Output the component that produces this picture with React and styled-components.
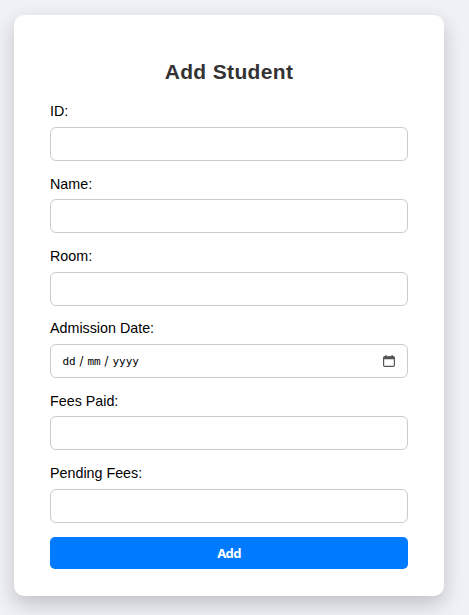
import React from 'react';
import styled, { createGlobalStyle } from 'styled-components';

const GlobalStyle = createGlobalStyle`
  * { box-sizing: border-box; }
  body {
    margin: 0;
    background: #f0f1f6;
    font-family: "Liberation Sans", Arial, sans-serif;
    overflow: hidden;
  }
`;

const Page = styled.main`
  height: 615px;
  padding: 14.67px 25px 0 14px;
`;

const Card = styled.form`
  width: 430px;
  height: 581.33px;
  padding: 44.33px 36px 0;
  background: #fff;
  border-radius: 10px;
  box-shadow: 0 8px 20px rgba(0, 0, 0, 0.2);
`;

const Title = styled.h2`
  margin: 0 0 16.3px;
  font-size: 21px;
  line-height: 26px;
  letter-spacing: 0.35px;
  text-align: center;
  color: #333;
`;

const Field = styled.label`
  display: flex;
  flex-direction: column;
  gap: 4.7px;
  height: 72.33px;
  font-size: 14.3px;
  line-height: 21px;
  color: #000;
`;

const fieldBox = `
  width: 100%;
  height: 34px;
  border: 1px solid #ccc;
  border-radius: 6px;
  background: #fff;
`;

const Input = styled.input`
  ${fieldBox}
  padding: 0 12px;
  font: 14px "Liberation Sans", Arial, sans-serif;
  outline: none;
`;

const DateBox = styled.div`
  ${fieldBox}
  display: flex;
  align-items: center;
  justify-content: space-between;
  padding: 0 12px 0 11px;
`;

const DateParts = styled.span`
  display: flex;
  gap: 2.5px;
  padding-top: 2px;
  font: 11px "DejaVu Sans Mono", monospace;
`;

const Part = styled.span`
  width: ${({ $w }) => $w}px;
  text-align: center;
  white-space: nowrap;
`;

const Slash = styled.span`
  width: 6px;
  font-family: "DejaVu Sans", sans-serif;
  font-size: 11.5px;
  line-height: 13px;
  text-align: center;
`;

const Button = styled.button`
  display: block;
  width: 100%;
  height: 32px;
  margin-top: 2.03px;
  padding: 0;
  border: 0;
  border-radius: 5px;
  background: #007bff;
  color: #fff;
  font: bold 13px "Noto Sans", "Open Sans", sans-serif;
  letter-spacing: -0.7px;
`;

const CalendarIcon = () => (
  <svg width="12" height="12" viewBox="0 0 12 12" fill="none">
    <rect x="0.6" y="1.8" width="10.8" height="9.6" rx="1.2" stroke="#555" strokeWidth="1.2" />
    <path d="M0.5 1.5h11v2.7h-11zM2 0.3h1.7v2H2zM8.3 0.3H10v2H8.3z" fill="#555" />
  </svg>
);

const fields = ['ID:', 'Name:', 'Room:', 'Admission Date:', 'Fees Paid:', 'Pending Fees:'];

export default function App() {
  return (
    <>
      <GlobalStyle />
      <Page>
        <Card>
          <Title>Add Student</Title>
          {fields.map((name) => (
            <Field key={name}>
              {name}
              {name === 'Admission Date:' ? (
                <DateBox>
                  <DateParts>
                    <Part $w={14}>dd</Part>
                    <Slash>/</Slash>
                    <Part $w={14}>mm</Part>
                    <Slash>/</Slash>
                    <Part $w={27.5}>yyyy</Part>
                  </DateParts>
                  <CalendarIcon />
                </DateBox>
              ) : (
                <Input />
              )}
            </Field>
          ))}
          <Button type="button">Add</Button>
        </Card>
      </Page>
    </>
  );
}
